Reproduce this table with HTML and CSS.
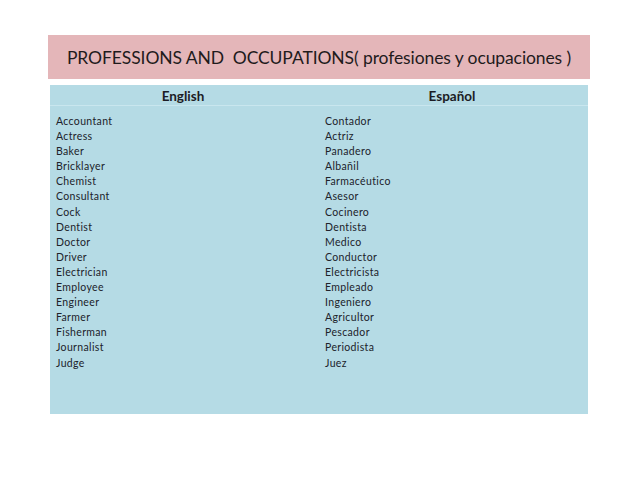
FILE: index.html
```
<!DOCTYPE html>
<html>
<head>
<meta charset="utf-8">
<link rel="stylesheet" href="styles.css">
</head>
<body>
<div class="slide">
  <div class="title">PROFESSIONS AND&nbsp; OCCUPATIONS( profesiones y ocupaciones )</div>
  <div class="table">
    <div class="head">
      <div class="col en">English</div>
      <div class="col es">Español</div>
    </div>
    <div class="body">
      <div class="col en">
        <div>Accountant</div><div>Actress</div><div>Baker</div><div>Bricklayer</div><div>Chemist</div><div>Consultant</div><div>Cock</div><div>Dentist</div><div>Doctor</div><div>Driver</div><div>Electrician</div><div>Employee</div><div>Engineer</div><div>Farmer</div><div>Fisherman</div><div>Journalist</div><div>Judge</div>
      </div>
      <div class="col es">
        <div>Contador</div><div>Actriz</div><div>Panadero</div><div>Albañil</div><div>Farmacéutico</div><div>Asesor</div><div>Cocinero</div><div>Dentista</div><div>Medico</div><div>Conductor</div><div>Electricista</div><div>Empleado</div><div>Ingeniero</div><div>Agricultor</div><div>Pescador</div><div>Periodista</div><div>Juez</div>
      </div>
    </div>
  </div>
</div>
</body>
</html>
```
FILE: styles.css
```
html, body { margin: 0; padding: 0; background: #fff; }
body { width: 638px; height: 479px; font-family: Lato, "Open Sans", sans-serif; color: #1c1c24; }
.slide { padding: 35px 48px 0 48px; display: flex; flex-direction: column; align-items: flex-start; }
.title {
  width: 542px; height: 44px; background: #e4b6b9;
  display: flex; align-items: center; justify-content: center;
  font-size: 17.5px; color: #1f1b1c; white-space: pre; letter-spacing: -0.1px;
}
.table { margin-top: 6px; margin-left: 2px; width: 538px; height: 329px; background: #b5dbe5; display: flex; flex-direction: column; }
.head { height: 20px; display: flex; border-bottom: 1px solid #c9e6ee; }
.head .col { font-weight: bold; font-size: 13.5px; display: flex; align-items: center; justify-content: center; padding-top: 1px; }
.col.en { width: 266px; }
.col.es { flex: 1; }
.body { display: flex; padding-top: 8px; }
.body .col { font-size: 10.5px; line-height: 15.1px; letter-spacing: 0.35px; color: #20222a; }
.body .en { padding-left: 6px; width: 260px; }
.body .es { padding-left: 9px; }
```
